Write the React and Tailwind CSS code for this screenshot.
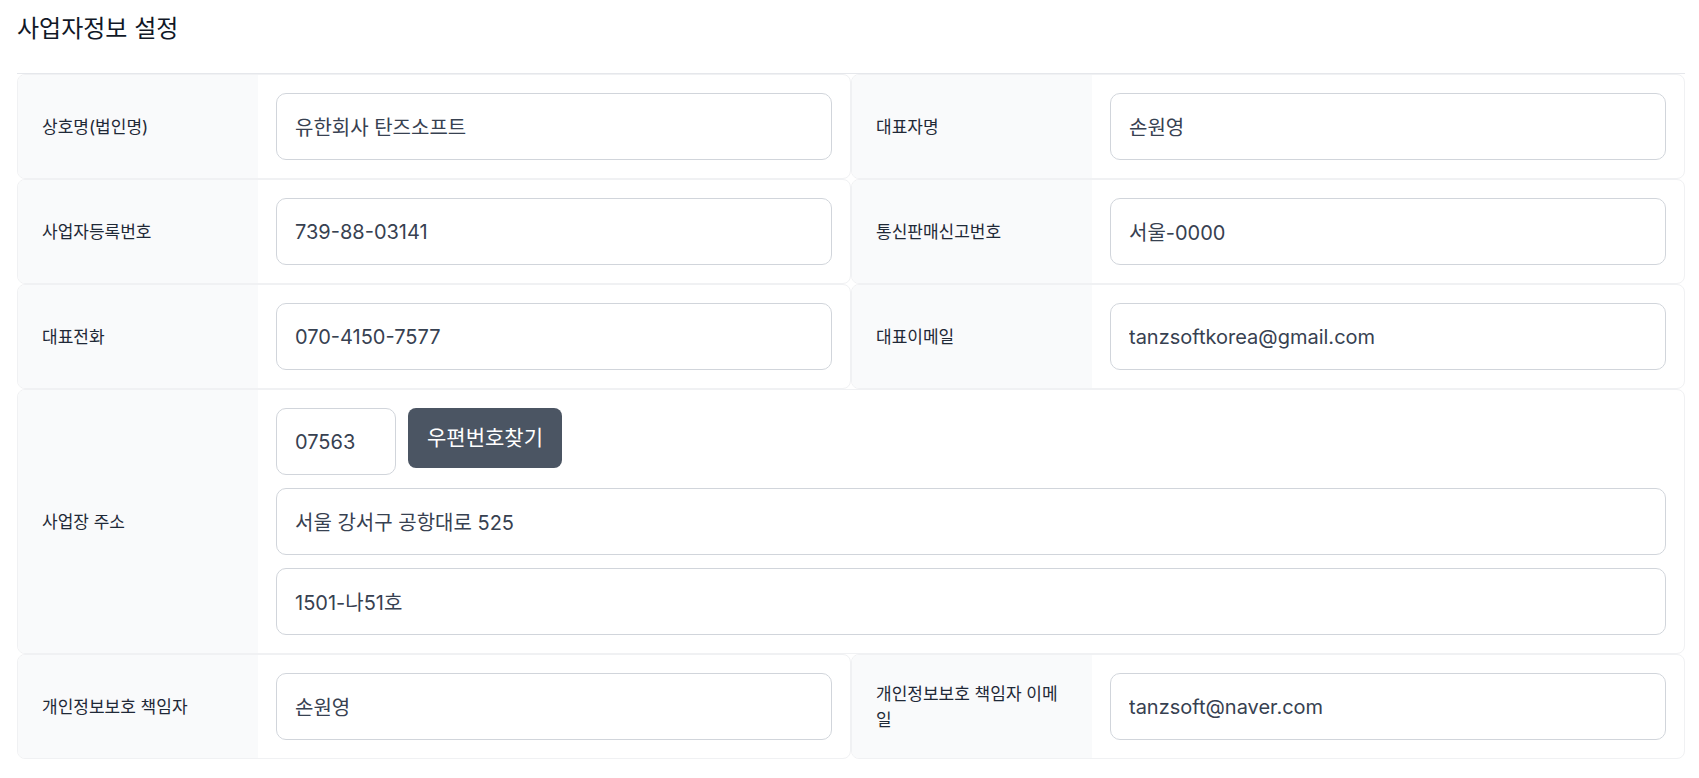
import React from 'react';

const inputCls =
    'h-[67px] w-full rounded-[10px] border border-[#d1d5db] bg-white px-[18px] text-[20px] text-[#374151] outline-none';

const labelCls =
    'w-[240px] shrink-0 bg-[#f9fafb] px-6 flex items-center text-[17px] leading-[26px] text-[#1f2937]';

function Field({ label, value }) {
    return (
        <div className="flex rounded-lg border border-[#f0f1f3] bg-white overflow-hidden">
            <div className={labelCls}>{label}</div>
            <div className="flex-1 px-[18px] py-[18px]">
                <input className={inputCls} defaultValue={value} />
            </div>
        </div>
    );
}

export default function App() {
    const rows = [
        ['상호명(법인명)', '유한회사 탄즈소프트', '대표자명', '손원영'],
        ['사업자등록번호', '739-88-03141', '통신판매신고번호', '서울-0000'],
        ['대표전화', '070-4150-7577', '대표이메일', 'tanzsoftkorea@gmail.com'],
    ];

    return (
        <div className="min-h-screen bg-white pl-[17px] pr-[14px] pt-[13px] font-['Inter','Noto_Sans_CJK_KR',sans-serif]">
            <h1 className="text-[24px] leading-[32px] text-[#111827] mb-[28px]">사업자정보 설정</h1>

            <div className="border-t border-[#e5e7eb] grid grid-cols-2">
                {rows.map((r) => (
                    <React.Fragment key={r[0]}>
                        <Field label={r[0]} value={r[1]} />
                        <Field label={r[2]} value={r[3]} />
                    </React.Fragment>
                ))}

                {/* 사업장 주소 */}
                <div className="col-span-2 flex rounded-lg border border-[#f0f1f3] bg-white overflow-hidden">
                    <div className={labelCls}>사업장 주소</div>
                    <div className="flex-1 px-[18px] py-[18px] flex flex-col gap-[13px]">
                        <div className="flex items-start gap-3">
                            <input className={inputCls + ' !w-[120px]'} defaultValue="07563" />
                            <button className="h-[60px] w-[154px] rounded-lg bg-[#4b5563] text-white text-[21px]">
                                우편번호찾기
                            </button>
                        </div>
                        <input className={inputCls} defaultValue="서울 강서구 공항대로 525" />
                        <input className={inputCls} defaultValue="1501-나51호" />
                    </div>
                </div>

                <Field label="개인정보보호 책임자" value="손원영" />
                <Field label="개인정보보호 책임자 이메일" value="tanzsoft@naver.com" />
            </div>
        </div>
    );
}
